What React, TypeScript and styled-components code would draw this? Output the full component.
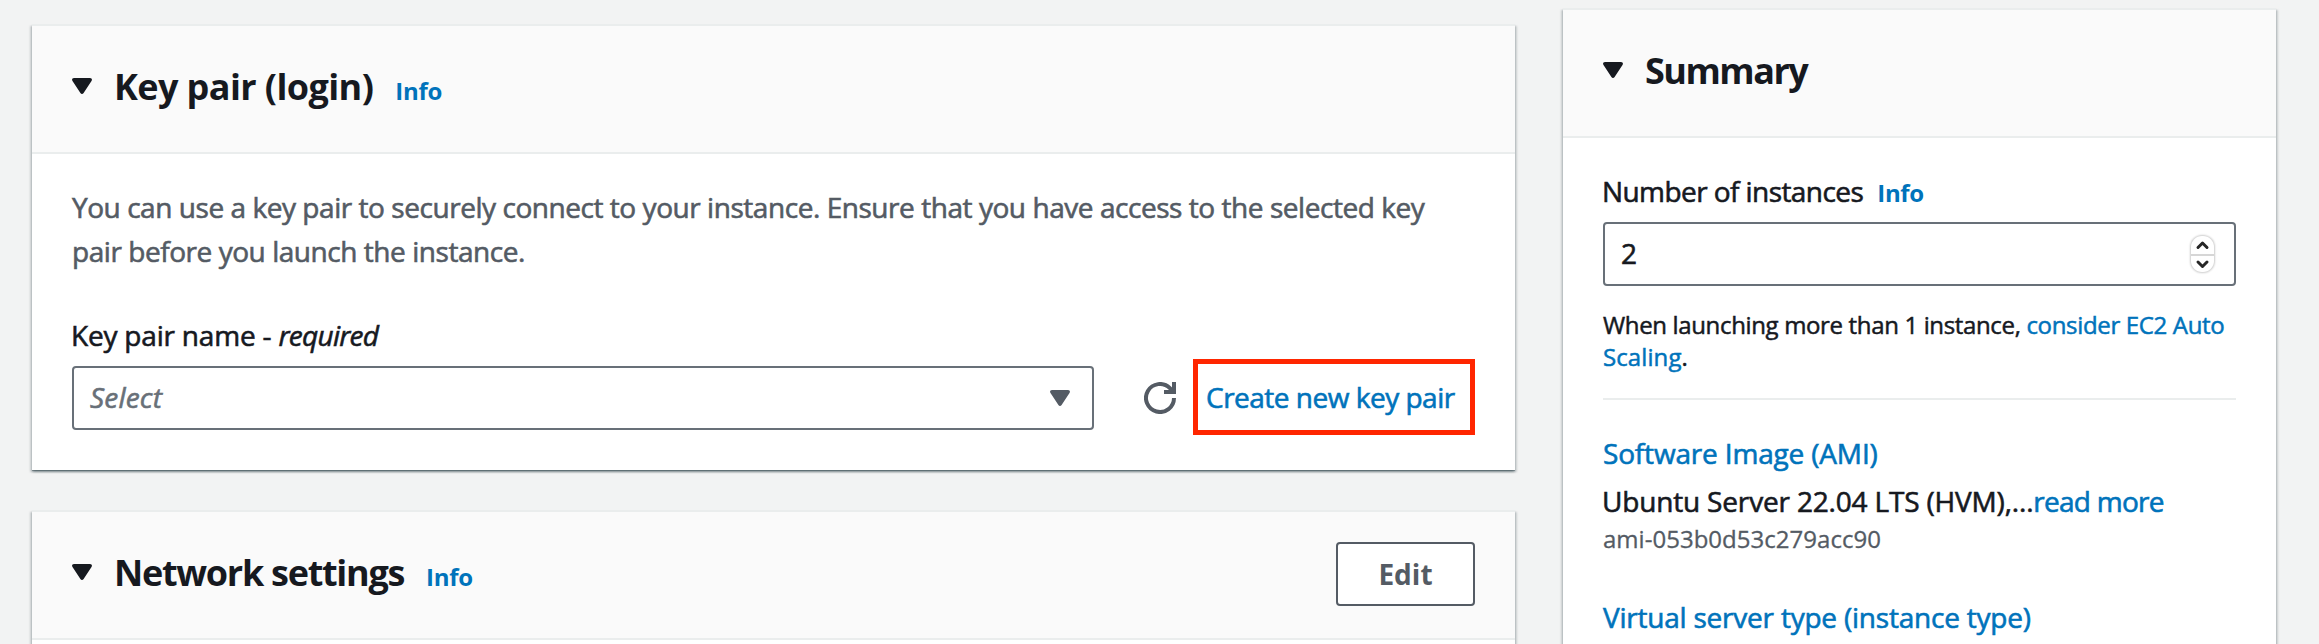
import React from 'react';
import styled, { createGlobalStyle } from 'styled-components';

const color = {
  page: '#f2f3f3',
  card: '#ffffff',
  header: '#fafafa',
  line: '#eaeded',
  text: '#16191f',
  muted: '#545b64',
  field: '#687078',
  link: '#0073bb',
  highlight: '#ff2600',
};

const GlobalStyle = createGlobalStyle`
  *, *::before, *::after { box-sizing: border-box; }
  body {
    margin: 0;
    background: ${color.page};
    color: ${color.text};
    font-family: "Open Sans", "Noto Sans", sans-serif;
    font-size: 28px;
    line-height: 44px;
    -webkit-text-stroke: 0.6px currentColor;
    overflow: hidden;
  }
`;

const Page = styled.div`
  display: grid;
  grid-template-columns: 1483px 713px;
  column-gap: 48px;
  align-items: start;
  height: 644px;
  padding-left: 32px;
  overflow: hidden;
`;

const MainColumn = styled.main`
  display: flex;
  flex-direction: column;
  gap: 40px;
  padding-top: 24px;
`;

const SideColumn = styled.aside`
  padding-top: 8px;
`;

const Card = styled.section<{ $minHeight?: number }>`
  min-height: ${(p) => p.$minHeight ?? 0}px;
  background: ${color.card};
  border-top: 2px solid ${color.line};
  box-shadow:
    0 2px 2px 0 rgba(0, 28, 36, 0.3),
    2px 2px 2px 0 rgba(0, 28, 36, 0.15),
    -2px 2px 2px 0 rgba(0, 28, 36, 0.15),
    0 1px 0 0 rgba(0, 28, 36, 0.25);
`;

const CardHeader = styled.header`
  display: flex;
  align-items: flex-start;
  height: 128px;
  padding: 30px 40px 0;
  background: ${color.header};
  border-bottom: 2px solid ${color.line};
`;

const HeaderCaret = styled.svg`
  flex: none;
  width: 20px;
  height: 16px;
  margin: 22px 22px 0 0;
  fill: ${color.text};
`;

const TitleGroup = styled.div`
  display: flex;
  flex: 1;
  align-items: baseline;
  margin-top: 11px;
`;

const Title = styled.h2<{ $track: number }>`
  margin: 0;
  font-size: 36px;
  font-weight: 700;
  line-height: 40px;
  letter-spacing: ${(p) => p.$track}px;
  -webkit-text-stroke: 0;
`;

const InfoLink = styled.a<{ $gap: number }>`
  margin-left: ${(p) => p.$gap}px;
  color: ${color.link};
  font-size: 24px;
  font-weight: 700;
  line-height: 32px;
  letter-spacing: -0.3px;
  -webkit-text-stroke: 0;
`;

const EditButton = styled.button`
  width: 139px;
  height: 64px;
  padding: 0;
  background: #fff;
  border: 2px solid ${color.muted};
  border-radius: 4px;
  color: ${color.muted};
  font: 700 28px/44px "Open Sans", sans-serif;
  -webkit-text-stroke: 0;
`;

const KeyPairBody = styled.div`
  display: flex;
  flex-direction: column;
  padding: 31px 40px 40px;
`;

const Paragraph = styled.p`
  margin: 0 0 40px;
  color: ${color.muted};
  letter-spacing: -0.45px;
  white-space: nowrap;
`;

const Label = styled.label<{ $track: number }>`
  letter-spacing: ${(p) => p.$track}px;
  margin-left: -1px;
`;

const Required = styled.i`
  letter-spacing: -0.7px;
`;

const FieldRow = styled.div`
  display: flex;
  align-items: center;
  height: 64px;
  margin-top: 9px;
`;

const Field = styled.div`
  display: flex;
  align-items: center;
  justify-content: space-between;
  height: 64px;
  padding: 0 22px 0 16px;
  background: #fff;
  border: 2px solid ${color.field};
  border-radius: 4px;
`;

const SelectField = styled(Field)`
  width: 1022px;
`;

const NumberField = styled(Field)`
  width: 633px;
`;

const Placeholder = styled.i`
  padding-bottom: 2px;
  color: ${color.field};
  letter-spacing: 0.2px;
`;

const NumberValue = styled.span`
  padding-bottom: 2px;
`;

const SelectCaret = styled.svg`
  width: 20px;
  height: 16px;
  fill: ${color.muted};
`;

const RefreshIcon = styled.svg`
  width: 32px;
  height: 32px;
  margin: 0 17px 0 50px;
`;

const HighlightFrame = styled.div`
  display: flex;
  flex: none;
  align-items: center;
  width: 282px;
  height: 76px;
  margin-top: -2px;
  padding-left: 8px;
  border: 5px solid ${color.highlight};
`;

const Link = styled.a<{ $track?: number }>`
  color: ${color.link};
  letter-spacing: ${(p) => p.$track ?? 0}px;
  white-space: nowrap;
`;

const SummaryBody = styled.div`
  display: flex;
  flex-direction: column;
  padding: 31px 40px 0;
`;

const LabelRow = styled.div`
  display: flex;
  align-items: baseline;
`;

const Stepper = styled.div`
  display: flex;
  flex-direction: column;
  width: 23px;
  height: 36px;
  margin-right: -2px;
  border-radius: 11px;
  background: #fff;
  box-shadow: 0 0 2px 1px rgba(0, 0, 0, 0.2);
`;

const Step = styled.svg`
  width: 23px;
  height: 18px;
  fill: none;
  stroke: #262626;
  stroke-width: 3;
  stroke-linecap: round;
  stroke-linejoin: round;

  & + & {
    border-top: 2px solid #d6d6d6;
  }
`;

const Hint = styled.p`
  margin: 23px 0 0;
  padding-bottom: 25px;
  border-bottom: 2px solid ${color.line};
  font-size: 24px;
  line-height: 32px;
  letter-spacing: -0.35px;
  white-space: nowrap;
  -webkit-text-stroke-width: 0.5px;
`;

const DetailTitle = styled.div<{ $top: number; $track: number }>`
  margin-top: ${(p) => p.$top}px;
  color: ${color.link};
  letter-spacing: ${(p) => p.$track}px;
  white-space: nowrap;
`;

const ImageName = styled.div`
  margin: 4px 0 0 -1px;
  letter-spacing: -0.17px;
  white-space: nowrap;
`;

const ImageId = styled.div`
  color: ${color.muted};
  font-size: 24px;
  line-height: 32px;
  letter-spacing: 0.02px;
  -webkit-text-stroke-width: 0.3px;
`;

const CARET_PATH =
  'M2 0H18C19.7 0 20.5 1.7 19.5 3L11.6 14.9C10.9 16.3 9.1 16.3 8.4 14.9L0.5 3C-0.5 1.7 0.3 0 2 0Z';

function Header({
  title,
  track,
  infoGap,
  action,
}: {
  title: string;
  track: number;
  infoGap?: number;
  action?: React.ReactNode;
}) {
  return (
    <CardHeader>
      <HeaderCaret viewBox="0 0 20 16">
        <path d={CARET_PATH} />
      </HeaderCaret>
      <TitleGroup>
        <Title $track={track}>{title}</Title>
        {infoGap !== undefined && <InfoLink $gap={infoGap}>Info</InfoLink>}
      </TitleGroup>
      {action}
    </CardHeader>
  );
}

export default function App() {
  return (
    <>
      <GlobalStyle />
      <Page>
        <MainColumn>
          <Card>
            <Header title="Key pair (login)" track={-0.6} infoGap={22} />
            <KeyPairBody>
              <Paragraph>
                You can use a key pair to securely connect to your instance. Ensure that you have
                access to the selected key
                <br />
                pair before you launch the instance.
              </Paragraph>
              <Label $track={-0.2}>
                Key pair name - <Required>required</Required>
              </Label>
              <FieldRow>
                <SelectField>
                  <Placeholder>Select</Placeholder>
                  <SelectCaret viewBox="0 0 20 16">
                    <path d={CARET_PATH} />
                  </SelectCaret>
                </SelectField>
                <RefreshIcon viewBox="0 0 32 32">
                  <path
                    d="M30 16A14 14 0 1 1 25.9 6.1L29 9.5"
                    fill="none"
                    stroke={color.muted}
                    strokeWidth="4"
                  />
                  <path d="M28 0H32V12H20V8H28Z" fill={color.muted} />
                </RefreshIcon>
                <HighlightFrame>
                  <Link $track={-0.5}>Create new key pair</Link>
                </HighlightFrame>
              </FieldRow>
            </KeyPairBody>
          </Card>
          <Card $minHeight={200}>
            <Header
              title="Network settings"
              track={-1.28}
              infoGap={22}
              action={<EditButton>Edit</EditButton>}
            />
          </Card>
        </MainColumn>
        <SideColumn>
          <Card $minHeight={700}>
            <Header title="Summary" track={-1.5} />
            <SummaryBody>
              <LabelRow>
                <Label $track={-0.57}>Number of instances</Label>
                <InfoLink $gap={14}>Info</InfoLink>
              </LabelRow>
              <FieldRow>
                <NumberField>
                  <NumberValue>2</NumberValue>
                  <Stepper>
                    <Step viewBox="0 0 23 18">
                      <path d="M7 11.5L11.5 7L16 11.5" />
                    </Step>
                    <Step viewBox="0 0 23 16">
                      <path d="M7 6L11.5 10.5L16 6" />
                    </Step>
                  </Stepper>
                </NumberField>
              </FieldRow>
              <Hint>
                When launching more than 1 instance, <Link $track={-0.33}>consider EC2 Auto</Link>
                <br />
                <Link $track={0.1}>Scaling</Link>.
              </Hint>
              <DetailTitle $top={31} $track={-0.17}>
                Software Image (AMI)
              </DetailTitle>
              <ImageName>
                Ubuntu Server 22.04 LTS (HVM),...<Link $track={-0.75}>read more</Link>
              </ImageName>
              <ImageId>ami-053b0d53c279acc90</ImageId>
              <DetailTitle $top={40} $track={-0.22}>
                Virtual server type (instance type)
              </DetailTitle>
            </SummaryBody>
          </Card>
        </SideColumn>
      </Page>
    </>
  );
}
